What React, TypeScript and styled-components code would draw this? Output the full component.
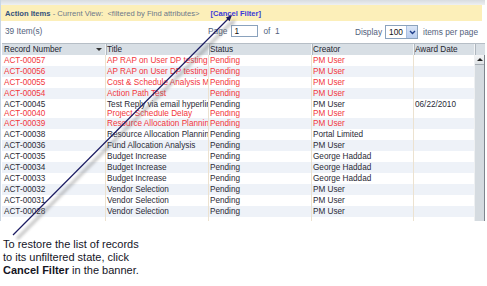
import React from 'react';
import styled, { createGlobalStyle } from 'styled-components';

const Global = createGlobalStyle`
  html, body { margin: 0; padding: 0; background: #fff; }
  body { font-family: "Liberation Sans", Arial, sans-serif; }
  * { box-sizing: border-box; }
`;

const Page = styled.div`
  position: relative;
  width: 487px;
  height: 286px;
  overflow: hidden;
`;

const Shot = styled.div`
  width: 485px;
  height: 221px;
  border-left: 1px solid #c9d6e4;
  display: flex;
  flex-direction: column;
  overflow: hidden;
  background: #fff;
`;

const TopStrip = styled.div`
  height: 5px;
  flex: none;
  background: linear-gradient(#d8dce0, #eef0f2);
`;

const Banner = styled.div`
  height: 16px;
  flex: none;
  margin-right: 3px;
  background: #fcefb9;
  display: flex;
  align-items: center;
  padding: 1px 0 0 4px;
  font-size: 7.6px;
  white-space: pre;
  color: #6b7789;
`;

const BannerTitle = styled.span`
  font-weight: bold;
  color: #34527c;
`;

const CancelLink = styled.span`
  font-weight: bold;
  color: #3b3bd8;
  margin-left: 11px;
`;

const InfoRow = styled.div`
  height: 22px;
  flex: none;
  display: grid;
  grid-template-columns: 203px 1fr auto;
  align-items: start;
  padding: 0 7px 0 4px;
  font-size: 8.3px;
  color: #52627c;
`;

const Count = styled.div`
  padding-top: 5px;
`;

const Group = styled.div`
  display: flex;
  align-items: center;
  padding-top: 4px;
  white-space: pre;
`;

const PageInput = styled.div`
  width: 27px;
  height: 12px;
  margin: 0 5px 0 4px;
  border: 1px solid #8aa2bd;
  background: #fff;
  color: #111;
  font-size: 8.3px;
  line-height: 10px;
  padding-left: 2px;
`;

const Select = styled.div`
  width: 33px;
  height: 14px;
  margin: 0 5px 0 3px;
  border: 1px solid #8aa2bd;
  background: #fff;
  display: flex;
  align-items: center;
  justify-content: space-between;
  color: #111;
  font-size: 8.3px;
  padding-left: 3px;
`;

const SelectBtn = styled.div`
  width: 11px;
  height: 12px;
  background: linear-gradient(#dbe6f7, #b9cdee);
  border-left: 1px solid #a9bfe0;
  display: flex;
  align-items: center;
  justify-content: center;
`;

const cols = '103px 103px 103px 102px 61px';

const HeaderRow = styled.div`
  height: 12px;
  flex: none;
  margin-left: 1px;
  border-top: 1px solid #b6bec6;
  background: #d8dfe5;
  display: grid;
  grid-template-columns: ${cols} 1fr;
  font-size: 8.2px;
  color: #1e2530;
`;

const HeadCell = styled.div<{ $first?: boolean }>`
  position: relative;
  border-left: ${(p) => (p.$first ? 'none' : '1px solid #f2f4f6')};
  box-shadow: ${(p) => (p.$first ? 'none' : 'inset 1px 0 0 #aeb6be')};
  padding-left: ${(p) => (p.$first ? '2px' : '1px')};
  line-height: 11px;
  white-space: nowrap;
  overflow: hidden;
`;

const SortMark = styled.span`
  position: absolute;
  right: 3px;
  top: 4px;
  width: 0;
  height: 0;
  border-left: 3px solid transparent;
  border-right: 3px solid transparent;
  border-top: 3px solid #333;
`;

const Body = styled.div`
  flex: 1;
  display: flex;
  margin-left: 1px;
  min-height: 0;
`;

const Rows = styled.div`
  width: 472px;
  display: flex;
  flex-direction: column;
`;

const Row = styled.div<{ $alt: boolean; $h: number }>`
  height: ${(p) => p.$h}px;
  flex: none;
  display: grid;
  grid-template-columns: ${cols};
  background: ${(p) => (p.$alt ? '#eef2f8' : '#fff')};
  font-size: 8.2px;
  color: ${(p) => p.color};
`;

const Cell = styled.div<{ $first?: boolean; $h: number }>`
  min-width: 0;
  border-left: ${(p) => (p.$first ? 'none' : '1px solid #ece2d0')};
  padding-left: ${(p) => (p.$first ? '2px' : '1px')};
  line-height: ${(p) => p.$h}px;
  white-space: nowrap;
  overflow: hidden;
  text-overflow: clip;
`;

const Filler = styled.div`
  flex: 1;
  display: grid;
  grid-template-columns: ${cols};
`;

const FillCell = styled.div`
  border-left: 1px solid #ece2d0;
  &:first-child { border-left: none; }
`;

const Scrollbar = styled.div`
  width: 11px;
  display: flex;
  flex-direction: column;
  border-left: 1px solid #eef0f2;
  border-right: 1px solid #7e868e;
  background: #d5dbe0;
`;

const ScrollUp = styled.div`
  height: 10px;
  background: linear-gradient(#f4f5f6, #dfe3e6);
  border-bottom: 1px solid #a6adb4;
  display: flex;
  align-items: center;
  justify-content: center;
`;

const UpTri = styled.span`
  width: 0;
  height: 0;
  border-left: 3px solid transparent;
  border-right: 3px solid transparent;
  border-bottom: 3px solid #222;
`;

const Caption = styled.div`
  margin: 17px 0 0 3px;
  font-size: 11px;
  line-height: 13px;
  color: #15151f;
`;

const Overlay = styled.svg`
  position: absolute;
  left: 0;
  top: 0;
  pointer-events: none;
`;

type R = [string, string, string, string, string, boolean, boolean, number];
// id, title, status, creator, date, red, alt, height
const rows: R[] = [
  ['ACT-00057', 'AP RAP on User DP testing', 'Pending', 'PM User', '', true, false, 11],
  ['ACT-00056', 'AP RAP on User DP testing', 'Pending', 'PM User', '', true, true, 11],
  ['ACT-00055', 'Cost & Schedule Analysis Meeting', 'Pending', 'PM User', '', true, false, 11],
  ['ACT-00054', 'Action Path Test', 'Pending', 'PM User', '', true, true, 11],
  ['ACT-00045', 'Test Reply via email hyperlink', 'Pending', 'PM User', '06/22/2010', false, false, 11],
  ['ACT-00040', 'Project Schedule Delay', 'Pending', 'PM User', '', true, false, 8],
  ['ACT-00039', 'Resource Allocation Planning', 'Pending', 'PM User', '', true, true, 11],
  ['ACT-00038', 'Resource Allocation Planning', 'Pending', 'Portal Limited', '', false, false, 11],
  ['ACT-00036', 'Fund Allocation Analysis', 'Pending', 'PM User', '', false, true, 11],
  ['ACT-00035', 'Budget Increase', 'Pending', 'George Haddad', '', false, false, 11],
  ['ACT-00034', 'Budget Increase', 'Pending', 'George Haddad', '', false, true, 11],
  ['ACT-00033', 'Budget Increase', 'Pending', 'George Haddad', '', false, false, 11],
  ['ACT-00032', 'Vendor Selection', 'Pending', 'PM User', '', false, true, 11],
  ['ACT-00031', 'Vendor Selection', 'Pending', 'PM User', '', false, false, 11],
  ['ACT-00028', 'Vendor Selection', 'Pending', 'PM User', '', false, true, 11],
];

export default function App() {
  return (
    <Page>
      <Global />
      <Shot>
        <TopStrip />
        <Banner>
          <BannerTitle>Action Items</BannerTitle>
          {' - Current View:  <filtered by Find attributes>'}
          <CancelLink>[Cancel Filter]</CancelLink>
        </Banner>
        <InfoRow>
          <Count>39 Item(s)</Count>
          <Group>
            Page
            <PageInput>1</PageInput>
            {'of  1'}
          </Group>
          <Group>
            Display
            <Select>
              100
              <SelectBtn>
                <svg width="7" height="5" viewBox="0 0 7 5">
                  <path d="M1 1 L3.5 3.5 L6 1" fill="none" stroke="#1f3f8a" strokeWidth="1.4" />
                </svg>
              </SelectBtn>
            </Select>
            items per page
          </Group>
        </InfoRow>
        <HeaderRow>
          <HeadCell $first>
            Record Number
            <SortMark />
          </HeadCell>
          <HeadCell>Title</HeadCell>
          <HeadCell>Status</HeadCell>
          <HeadCell>Creator</HeadCell>
          <HeadCell>Award Date</HeadCell>
          <HeadCell />
        </HeaderRow>
        <Body>
          <Rows>
            {rows.map((r) => (
              <Row key={r[0]} $alt={r[6]} $h={r[7]} color={r[5] ? '#f2363c' : '#2a2a36'}>
                <Cell $first $h={r[7]}>{r[0]}</Cell>
                <Cell $h={r[7]}>{r[1]}</Cell>
                <Cell $h={r[7]}>{r[2]}</Cell>
                <Cell $h={r[7]}>{r[3]}</Cell>
                <Cell $h={r[7]}>{r[4]}</Cell>
              </Row>
            ))}
            <Filler>
              <FillCell />
              <FillCell />
              <FillCell />
              <FillCell />
              <FillCell />
            </Filler>
          </Rows>
          <Scrollbar>
            <ScrollUp>
              <UpTri />
            </ScrollUp>
          </Scrollbar>
        </Body>
      </Shot>
      <Caption>
        To restore the list of records
        <br />
        to its unfiltered state, click
        <br />
        <b>Cancel Filter</b> in the banner.
      </Caption>
      <Overlay width="487" height="286" viewBox="0 0 487 286">
        <defs>
          <filter id="blur" x="-20%" y="-20%" width="140%" height="140%">
            <feGaussianBlur stdDeviation="1.6" />
          </filter>
        </defs>
        <g filter="url(#blur)" opacity="0.45">
          <line x1="17" y1="239" x2="231" y2="23" stroke="#777" strokeWidth="3" />
          <polygon points="236,19 233,26 229,22" fill="#777" />
        </g>
        <line x1="13" y1="235" x2="228" y2="19" stroke="#1c1c62" strokeWidth="1.2" />
        <polygon points="232,15 229.6,21.2 225.8,17.4" fill="#1c1c62" />
      </Overlay>
    </Page>
  );
}
